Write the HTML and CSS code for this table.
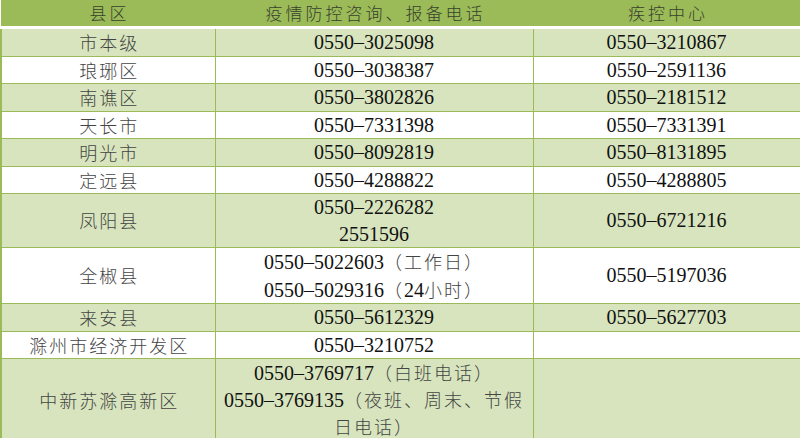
FILE: index.html
```html
<!DOCTYPE html>
<html lang="zh-CN">
<head>
<meta charset="utf-8">
<title>滁州疫情防控咨询电话</title>
<link rel="stylesheet" href="styles.css">
</head>
<body>
<table class="phones">
  <colgroup>
    <col class="c-area">
    <col class="c-hot">
    <col class="c-cdc">
  </colgroup>
  <thead>
    <tr>
      <th>县区</th>
      <th>疫情防控咨询、报备电话</th>
      <th>疾控中心</th>
    </tr>
  </thead>
  <tbody>
    <tr class="alt"><td class="cn">市本级</td><td>0550–3025098</td><td>0550–3210867</td></tr>
    <tr><td class="cn">琅琊区</td><td>0550–3038387</td><td>0550–2591136</td></tr>
    <tr class="alt"><td class="cn">南谯区</td><td>0550–3802826</td><td>0550–2181512</td></tr>
    <tr><td class="cn">天长市</td><td>0550–7331398</td><td>0550–7331391</td></tr>
    <tr class="alt"><td class="cn">明光市</td><td>0550–8092819</td><td>0550–8131895</td></tr>
    <tr><td class="cn">定远县</td><td>0550–4288822</td><td>0550–4288805</td></tr>
    <tr class="alt"><td class="cn">凤阳县</td><td>0550–2226282<br>2551596</td><td>0550–6721216</td></tr>
    <tr><td class="cn">全椒县</td><td>0550–5022603<span class="zh">（工作日）</span><br>0550–5029316<span class="zh">（</span>24<span class="zh">小时）</span></td><td>0550–5197036</td></tr>
    <tr class="alt"><td class="cn">来安县</td><td>0550–5612329</td><td>0550–5627703</td></tr>
    <tr><td class="cn">滁州市经济开发区</td><td>0550–3210752</td><td></td></tr>
    <tr class="alt last"><td class="cn">中新苏滁高新区</td><td>0550–3769717<span class="zh">（白班电话）</span><br>0550–3769135<span class="zh">（夜班、周末、节假日电话）</span></td><td></td></tr>
  </tbody>
</table>
</body>
</html>
```

FILE: styles.css
```css
html, body {
  margin: 0;
  padding: 0;
  background: #ffffff;
}

.phones {
  width: 799px;
  border-collapse: collapse;
  table-layout: fixed;
  font-family: "Liberation Serif", "Times New Roman", serif;
  font-size: 20px;
  font-weight: 400;
  color: #111111;
}

.c-area { width: 214px; }
.c-hot { width: 318px; }
.c-cdc { width: 267px; }

.phones th {
  background: #9bbb59;
  color: #38402c;
  font-family: "Noto Sans CJK SC", sans-serif;
  font-size: 17px;
  font-weight: 300;
  letter-spacing: 3px;
  line-height: 22px;
  padding: 2px 5px 2px 8px;
  text-align: center;
  border-bottom: 3px solid #ffffff;
}

.phones td {
  padding: 0 8px;
  line-height: 26.5px;
  text-align: center;
  vertical-align: middle;
  border: 1px solid #9bbb59;
}

.phones tbody tr:first-child td {
  border-top: none;
}

.phones tbody tr td:first-child {
  border-left-width: 2px;
}

.phones tbody tr.last td {
  border-bottom-width: 2px;
  line-height: 26px;
}

.phones tr.alt td {
  background: #d7e4bd;
}

.phones td.cn,
.phones .zh {
  font-family: "Noto Sans CJK SC", sans-serif;
  font-size: 18px;
  letter-spacing: 2px;
  font-weight: 300;
  color: #444444;
}

.phones td.cn {
  padding-left: 10px;
}
```
